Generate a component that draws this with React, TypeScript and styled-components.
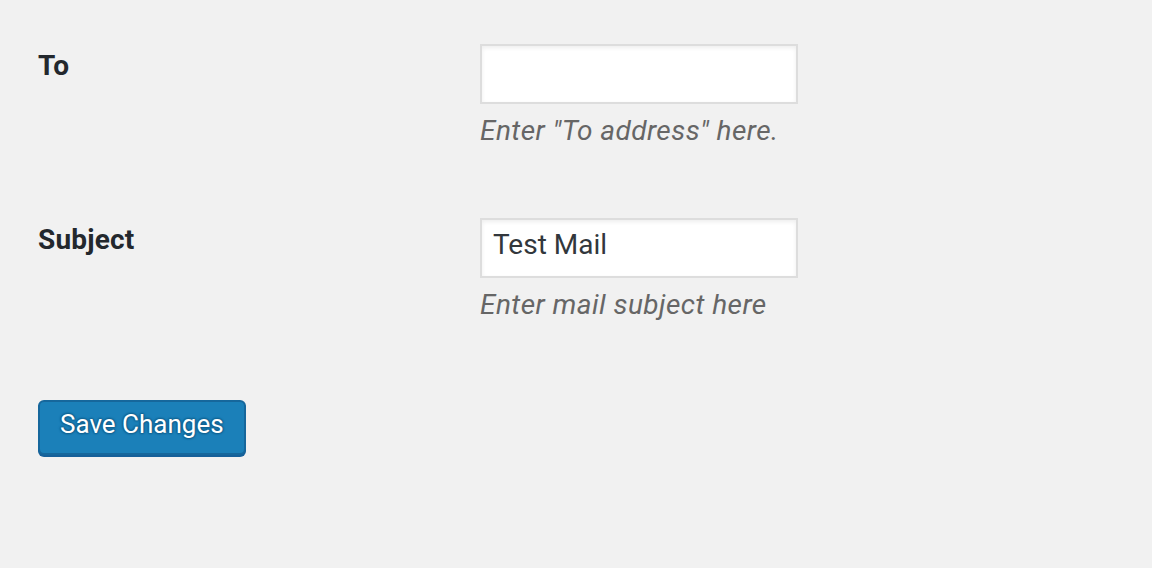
import React from "react";
import styled, { createGlobalStyle } from "styled-components";

const Global = createGlobalStyle`
  html, body {
    margin: 0;
    padding: 0;
    background: #f1f1f1;
  }
  body {
    font-family: Roboto, "Liberation Sans", Arial, sans-serif;
    color: #23282d;
  }
`;

const Page = styled.form`
  padding: 0 38px;
  min-height: 568px;
  box-sizing: border-box;
`;

const Row = styled.div`
  display: grid;
  grid-template-columns: 442px 1fr;
  padding: 44px 0 25px;
`;

const Label = styled.label`
  font-size: 28px;
  font-weight: 700;
  line-height: 36px;
  padding-top: 4px;
  letter-spacing: 0.2px;
  color: #23282d;
`;

const Field = styled.div`
  display: flex;
  flex-direction: column;
  align-items: flex-start;
`;

const Input = styled.input`
  box-sizing: border-box;
  width: 318px;
  height: 60px;
  margin: 0;
  padding: 8px 11px 16px;
  border: 2px solid #dddddd;
  background: #ffffff;
  box-shadow: inset 0 2px 4px rgba(0, 0, 0, 0.07);
  font-family: Roboto, "Liberation Sans", Arial, sans-serif;
  font-size: 28px;
  line-height: 32px;
  color: #32373c;
  outline: none;
`;

const Description = styled.p`
  margin: 9px 0 0;
  font-size: 28px;
  line-height: 36px;
  font-style: italic;
  letter-spacing: 0.45px;
  color: #666666;
`;

const Submit = styled.div`
  padding-top: 52px;
`;

const Button = styled.button`
  box-sizing: border-box;
  height: 55px;
  padding: 0 20px 7px;
  border: 2px solid #16679c;
  border-radius: 6px;
  background: #1b80b9;
  box-shadow: 0 2px 0 #15609a;
  font-family: Roboto, "Liberation Sans", Arial, sans-serif;
  font-size: 26px;
  line-height: 44px;
  color: #ffffff;
  text-shadow: 0 -1px 2px #11608f, 1px 0 2px #11608f, 0 1px 2px #11608f,
    -1px 0 2px #11608f;
  cursor: pointer;
`;

export default function App() {
  return (
    <>
      <Global />
      <Page onSubmit={(e) => e.preventDefault()}>
        <Row>
          <Label htmlFor="to">To</Label>
          <Field>
            <Input id="to" type="text" defaultValue="" />
            <Description>Enter "To address" here.</Description>
          </Field>
        </Row>
        <Row>
          <Label htmlFor="subject">Subject</Label>
          <Field>
            <Input id="subject" type="text" defaultValue="Test Mail" />
            <Description>Enter mail subject here</Description>
          </Field>
        </Row>
        <Submit>
          <Button type="submit">Save Changes</Button>
        </Submit>
      </Page>
    </>
  );
}
